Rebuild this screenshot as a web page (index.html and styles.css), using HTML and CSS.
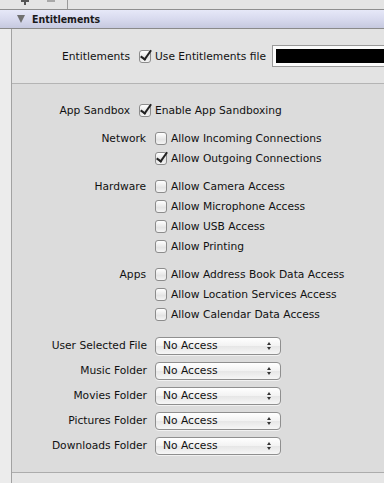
FILE: index.html
```html
<!DOCTYPE html>
<html>
<head>
<meta charset="utf-8">
<link rel="stylesheet" href="styles.css">
</head>
<body>
<div class="toolbar">
  <span class="tb-plus"></span>
  <span class="tb-minus"></span>
  <span class="tb-sep"></span>
</div>
<div class="header">
  <span class="disclosure"></span>
  <span class="header-title">Entitlements</span>
</div>
<div class="main">
  <div class="gutter"></div>
  <div class="content">
    <div class="section top">
      <div class="row wide">
        <span class="label">Entitlements</span>
        <span class="cb checked"></span>
        <span class="text">Use Entitlements file</span>
        <span class="field"></span>
      </div>
    </div>
    <div class="section sandbox">
      <div class="row wide">
        <span class="label">App Sandbox</span>
        <span class="cb checked"></span>
        <span class="text">Enable App Sandboxing</span>
      </div>
      <div class="group">
        <div class="row"><span class="label">Network</span><span class="cb"></span><span class="text">Allow Incoming Connections</span></div>
        <div class="row"><span class="label"></span><span class="cb checked"></span><span class="text">Allow Outgoing Connections</span></div>
      </div>
      <div class="group">
        <div class="row"><span class="label">Hardware</span><span class="cb"></span><span class="text">Allow Camera Access</span></div>
        <div class="row"><span class="label"></span><span class="cb"></span><span class="text">Allow Microphone Access</span></div>
        <div class="row"><span class="label"></span><span class="cb"></span><span class="text">Allow USB Access</span></div>
        <div class="row"><span class="label"></span><span class="cb"></span><span class="text">Allow Printing</span></div>
      </div>
      <div class="group">
        <div class="row"><span class="label">Apps</span><span class="cb"></span><span class="text">Allow Address Book Data Access</span></div>
        <div class="row"><span class="label"></span><span class="cb"></span><span class="text">Allow Location Services Access</span></div>
        <div class="row"><span class="label"></span><span class="cb"></span><span class="text">Allow Calendar Data Access</span></div>
      </div>
      <div class="selects">
        <div class="srow"><span class="label">User Selected File</span><span class="popup">No Access<span class="arrows"></span></span></div>
        <div class="srow"><span class="label">Music Folder</span><span class="popup">No Access<span class="arrows"></span></span></div>
        <div class="srow"><span class="label">Movies Folder</span><span class="popup">No Access<span class="arrows"></span></span></div>
        <div class="srow"><span class="label">Pictures Folder</span><span class="popup">No Access<span class="arrows"></span></span></div>
        <div class="srow"><span class="label">Downloads Folder</span><span class="popup">No Access<span class="arrows"></span></span></div>
      </div>
    </div>
    <div class="bottom"></div>
  </div>
</div>
</body>
</html>
```

FILE: styles.css
```css
html, body {
  margin: 0;
  padding: 0;
}
body {
  width: 384px;
  height: 483px;
  overflow: hidden;
  background: #e8e8e8;
  font-family: "DejaVu Sans", sans-serif;
  font-size: 10.7px;
  color: #111;
}
.toolbar {
  height: 9px;
  background: #e4e4e4;
  border-bottom: 1px solid #8e8e8e;
  display: flex;
  align-items: flex-start;
  overflow: hidden;
}
.tb-plus {
  position: relative;
  width: 9px;
  height: 6px;
  margin-left: 21px;
}
.tb-plus::before {
  content: "";
  position: absolute;
  left: 3px;
  top: 0;
  width: 2px;
  height: 5px;
  background: #555;
}
.tb-plus::after {
  content: "";
  position: absolute;
  left: 0;
  top: 0;
  width: 8px;
  height: 2px;
  background: #555;
}
.tb-minus {
  width: 8px;
  height: 2px;
  margin-left: 17px;
  background: #a8a8a8;
}
.tb-sep {
  margin-left: 12px;
  width: 1px;
  height: 9px;
  background: #9a9a9a;
}
.header {
  height: 18px;
  background: linear-gradient(#e6e8f8, #d8daee 50%, #c6c9df);
  border-bottom: 1px solid #8a8a8a;
  display: flex;
  align-items: center;
}
.disclosure {
  width: 0;
  height: 0;
  margin-left: 17px;
  border-left: 4.5px solid transparent;
  border-right: 4.5px solid transparent;
  border-top: 8px solid #707070;
}
.header-title {
  margin-left: 7px;
  font-family: "DejaVu Sans Condensed", "DejaVu Sans", sans-serif;
  font-weight: bold;
  font-size: 10.5px;
  color: #1a1a1a;
}
.main {
  display: flex;
  height: 454px;
}
.gutter {
  width: 11px;
  background: #ececec;
  border-right: 1px solid #a2a2a2;
}
.content {
  flex: 1;
  display: flex;
  flex-direction: column;
}
.section.top {
  height: 54px;
  background: #e3e3e3;
  border-bottom: 1px solid #b4b4b4;
  display: flex;
  align-items: center;
}
.section.sandbox {
  flex: 1;
  background: #dcdcdc;
  border-bottom: 1px solid #acacac;
  padding-top: 16px;
}
.bottom {
  height: 10px;
  background: #e6e6e6;
}
.row {
  height: 20px;
  display: flex;
  align-items: center;
  white-space: nowrap;
}
.label {
  width: 134px;
  flex: none;
  text-align: right;
  margin-right: 9px;
}
.row.wide .label {
  width: 118px;
  margin-right: 9px;
}
.section.top .row {
  width: 100%;
}
.group {
  margin-top: 8px;
}
.cb {
  flex: none;
  width: 10px;
  height: 11px;
  border: 1px solid #8c8c8c;
  border-radius: 3px;
  background: linear-gradient(#ffffff, #e4e4e4 60%, #f4f4f4);
  margin-right: 4px;
  position: relative;
  box-sizing: content-box;
}
.cb.checked::after {
  content: "";
  position: absolute;
  left: 3px;
  top: -3px;
  width: 4px;
  height: 10px;
  border-right: 2px solid #222;
  border-bottom: 2px solid #222;
  transform: rotate(35deg);
  transform-origin: center;
}
.field {
  margin-left: 7px;
  flex: 1;
  height: 14px;
  background: #000;
  border: 3px solid #fbfbfb;
  outline: 1px solid #9a9a9a;
  margin-right: -10px;
}
.selects {
  margin-top: 9px;
}
.srow {
  height: 25px;
  display: flex;
  align-items: center;
  white-space: nowrap;
}
.srow .label {
  width: 135px;
  margin-right: 8px;
}
.popup {
  box-sizing: border-box;
  width: 126px;
  height: 18px;
  border: 1px solid #8f8f8f;
  border-radius: 4px;
  background: linear-gradient(#ffffff, #f2f2f2 50%, #e6e6e6 51%, #f6f6f6);
  padding-left: 7px;
  display: flex;
  align-items: center;
  position: relative;
  box-shadow: 0 1px 0 rgba(255,255,255,0.6);
}
.arrows {
  position: absolute;
  right: 8px;
  top: 4px;
  width: 5px;
  height: 8px;
}
.arrows::before, .arrows::after {
  content: "";
  position: absolute;
  left: 0;
  border-left: 2.5px solid transparent;
  border-right: 2.5px solid transparent;
}
.arrows::before {
  top: 0;
  border-bottom: 3px solid #333;
}
.arrows::after {
  bottom: 0;
  border-top: 3px solid #333;
}
```
